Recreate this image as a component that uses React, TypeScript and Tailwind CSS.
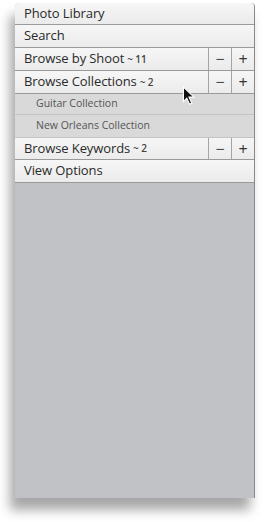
import React from 'react';

const font = { fontFamily: '"Open Sans", "Noto Sans", sans-serif' };

const Header: React.FC<{ label: string; count?: string; buttons?: boolean; h?: string }> = ({
  label,
  count,
  buttons,
  h = 'h-[23px]',
}) => (
  <div className={`flex ${h} border-b border-[#9a9a9a] bg-gradient-to-b from-[#f6f6f6] to-[#ebebeb]`}>
    <div className="flex flex-1 items-center pl-[9px] text-[13px] text-[#2a2a2a] tracking-[-0.1px]">
      {label}
      {count && <span className="ml-[3px] text-[10px] font-semibold text-[#444]">~ {count}</span>}
    </div>
    {buttons && (
      <>
        <div className="flex w-[23px] items-center justify-center border-l border-[#a5a5a5] text-[16px] text-[#4a4a4a]">−</div>
        <div className="flex w-[23px] items-center justify-center border-l border-[#a5a5a5] text-[16px] text-[#333]">+</div>
      </>
    )}
  </div>
);

const SubRow: React.FC<{ label: string; h: string }> = ({ label, h }) => (
  <div className={`flex ${h} items-center border-b border-[#c4c4c4] bg-[#d9d9d9] pl-[21px] text-[10.5px] text-[#555]`}>
    {label}
  </div>
);

export default function App() {
  return (
    <div className="relative h-[522px] w-[269px] bg-white" style={font}>
      <div className="ml-[15px] mt-[3px] flex h-[495px] w-[240px] flex-col overflow-hidden rounded-t-[4px] border-r border-[#8a8a8a] bg-[#c1c2c5] shadow-[-5px_12px_12px_rgba(0,0,0,0.35)]">
        <Header label="Photo Library" h="h-[22px]" />
        <Header label="Search" />
        <Header label="Browse by Shoot" count="11" buttons />
        <Header label="Browse Collections" count="2" buttons />
        <SubRow label="Guitar Collection" h="h-[21px]" />
        <SubRow label="New Orleans Collection" h="h-[23px]" />
        <Header label="Browse Keywords" count="2" buttons h="h-[22px]" />
        <Header label="View Options" />
      </div>

      {/* mouse pointer */}
      <svg className="absolute left-[182px] top-[83px]" width="14" height="20" viewBox="0 0 12 18">
        <path d="M1 1 L1 14 L4 11 L6.5 16.5 L8.5 15.5 L6 10 L10.5 10 Z" fill="#111" stroke="#fff" strokeWidth="1" />
      </svg>
    </div>
  );
}
